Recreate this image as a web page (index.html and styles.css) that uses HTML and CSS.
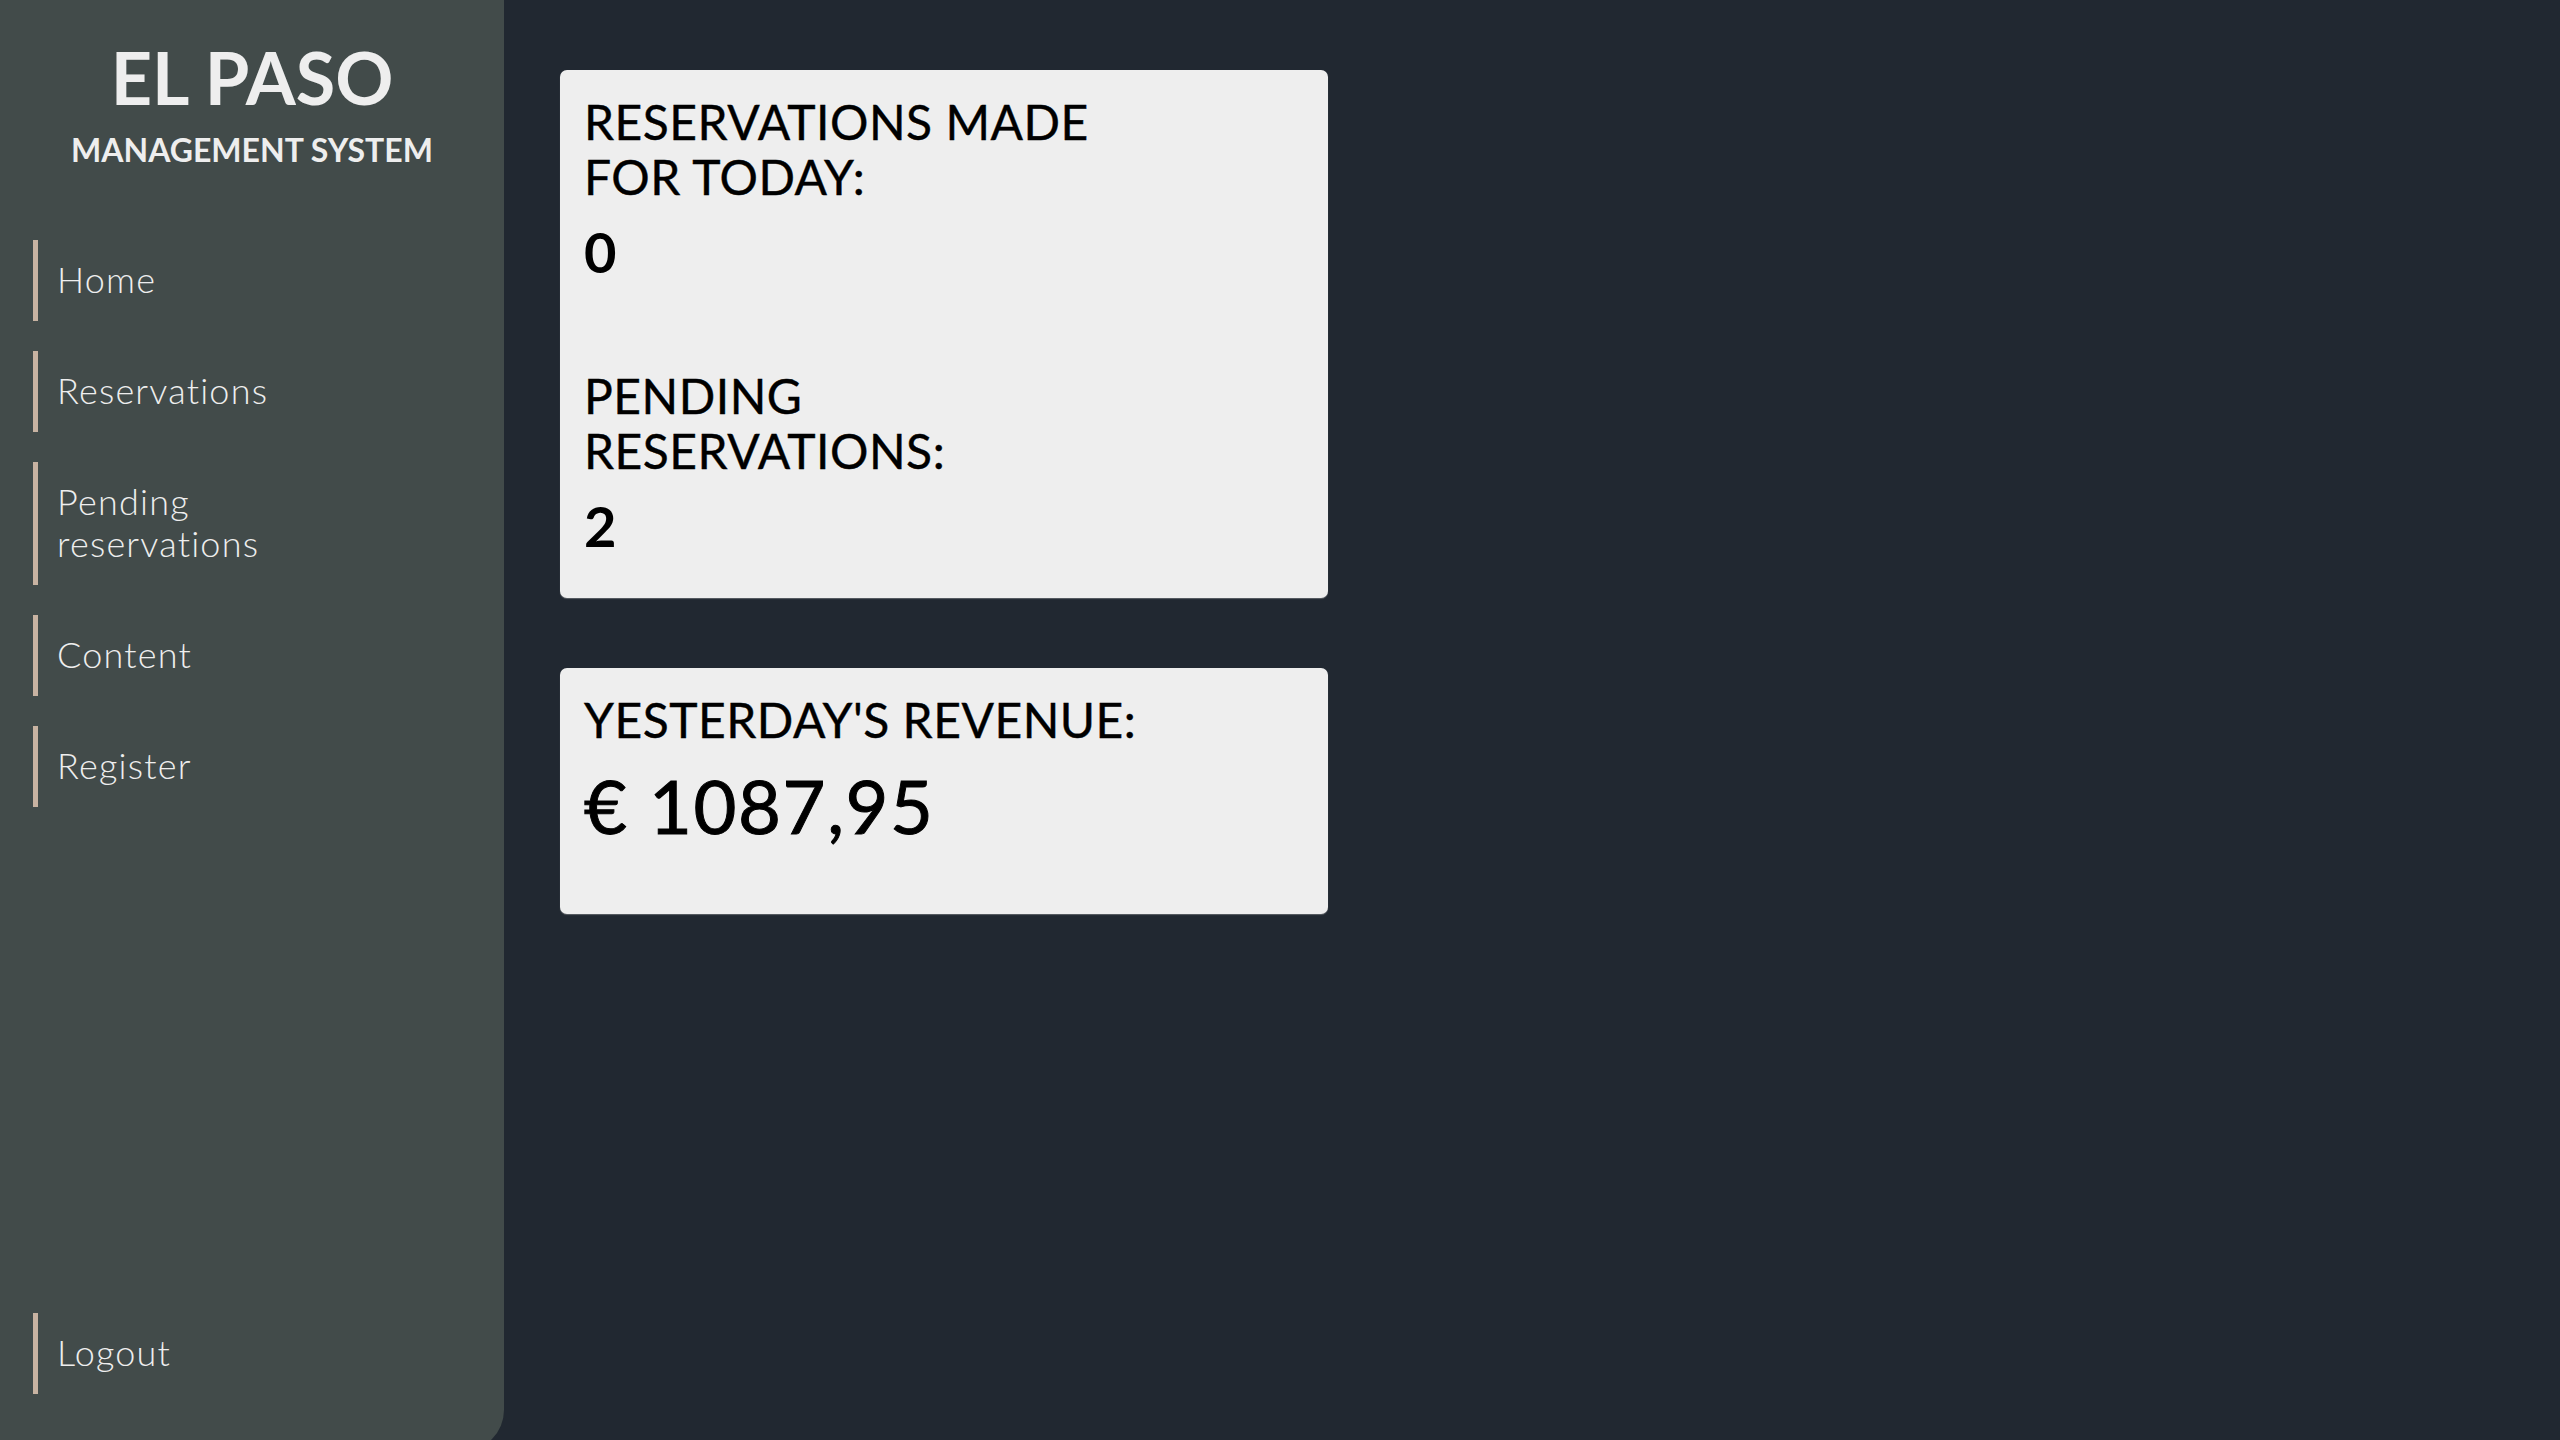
FILE: index.html
```html
<!DOCTYPE html>
<html lang="en">
<head>
<meta charset="utf-8">
<title>El Paso Management System</title>
<link rel="stylesheet" href="styles.css">
</head>
<body>
<div class="layout">
  <aside class="sidebar">
    <header class="brand">
      <h1 class="brand-title">EL PASO</h1>
      <p class="brand-sub">MANAGEMENT SYSTEM</p>
    </header>
    <nav class="nav">
      <a class="nav-item" href="#">Home</a>
      <a class="nav-item" href="#">Reservations</a>
      <a class="nav-item" href="#">Pending<br>reservations</a>
      <a class="nav-item" href="#">Content</a>
      <a class="nav-item" href="#">Register</a>
    </nav>
    <nav class="nav nav-bottom">
      <a class="nav-item" href="#">Logout</a>
    </nav>
  </aside>
  <main class="main">
    <section class="card card-today">
      <div class="stat">
        <h3 class="stat-label">RESERVATIONS MADE<br>FOR TODAY:</h3>
        <p class="stat-value">0</p>
      </div>
      <div class="stat stat-second">
        <h3 class="stat-label">PENDING<br>RESERVATIONS:</h3>
        <p class="stat-value">2</p>
      </div>
    </section>
    <section class="card card-revenue">
      <div class="stat">
        <h3 class="stat-label">YESTERDAY'S REVENUE:</h3>
        <p class="stat-money">€ 1087,95</p>
      </div>
    </section>
  </main>
</div>
</body>
</html>
```

FILE: styles.css
```css
html, body {
  margin: 0;
  padding: 0;
  height: 100%;
  overflow: hidden;
}
body {
  background: #212831;
  font-family: Lato, "Open Sans", sans-serif;
  color: #eeeeee;
}
.layout {
  display: flex;
  align-items: flex-start;
  height: 100vh;
}
.sidebar {
  width: 504px;
  flex: 0 0 504px;
  height: 1451px;
  background: #424b4a;
  border-bottom-right-radius: 41px;
  display: flex;
  flex-direction: column;
  box-sizing: border-box;
  padding: 35px 0 57px 33px;
}
.brand {
  text-align: center;
  margin-left: -33px;
}
.brand-title {
  margin: 0;
  font-size: 72px;
  font-weight: 700;
  line-height: 84px;
  color: #eeeeee;
}
.brand-sub {
  margin: 12px 0 0;
  font-size: 32px;
  font-weight: 700;
  line-height: 38px;
}
.nav {
  display: flex;
  flex-direction: column;
  gap: 30px;
  margin-top: 71px;
}
.nav-bottom {
  margin-top: auto;
}
.nav-item {
  display: block;
  border-left: 5px solid #c8b3a2;
  padding: 18px 0 21px 19px;
  font-size: 36px;
  font-weight: 300;
  line-height: 42px;
  letter-spacing: 1.2px;
  color: #eeeeee;
  text-decoration: none;
}
.main {
  padding: 70px 0 0 56px;
  display: flex;
  flex-direction: column;
  gap: 70px;
}
.card {
  width: 768px;
  box-sizing: border-box;
  background: #eeeeee;
  border-radius: 7px;
  box-shadow: 0 1px 1px rgba(200, 200, 200, 0.35);
  color: #000;
  padding: 24px 24px 39px;
}
.stat-label {
  margin: 0;
  font-size: 48px;
  font-weight: 400;
  line-height: 55px;
  letter-spacing: 0.5px;
  -webkit-text-stroke: 0.4px #000;
}
.stat-value {
  margin: 14px 0 0;
  font-size: 56px;
  font-weight: 700;
  line-height: 67px;
  letter-spacing: 3px;
}
.stat-second {
  margin-top: 83px;
}
.stat-money {
  margin: 14px 0 0;
  font-size: 74px;
  font-weight: 400;
  line-height: 89px;
  letter-spacing: 1.6px;
  -webkit-text-stroke: 1px #000;
}
.card-revenue {
  padding-bottom: 64px;
}
```
